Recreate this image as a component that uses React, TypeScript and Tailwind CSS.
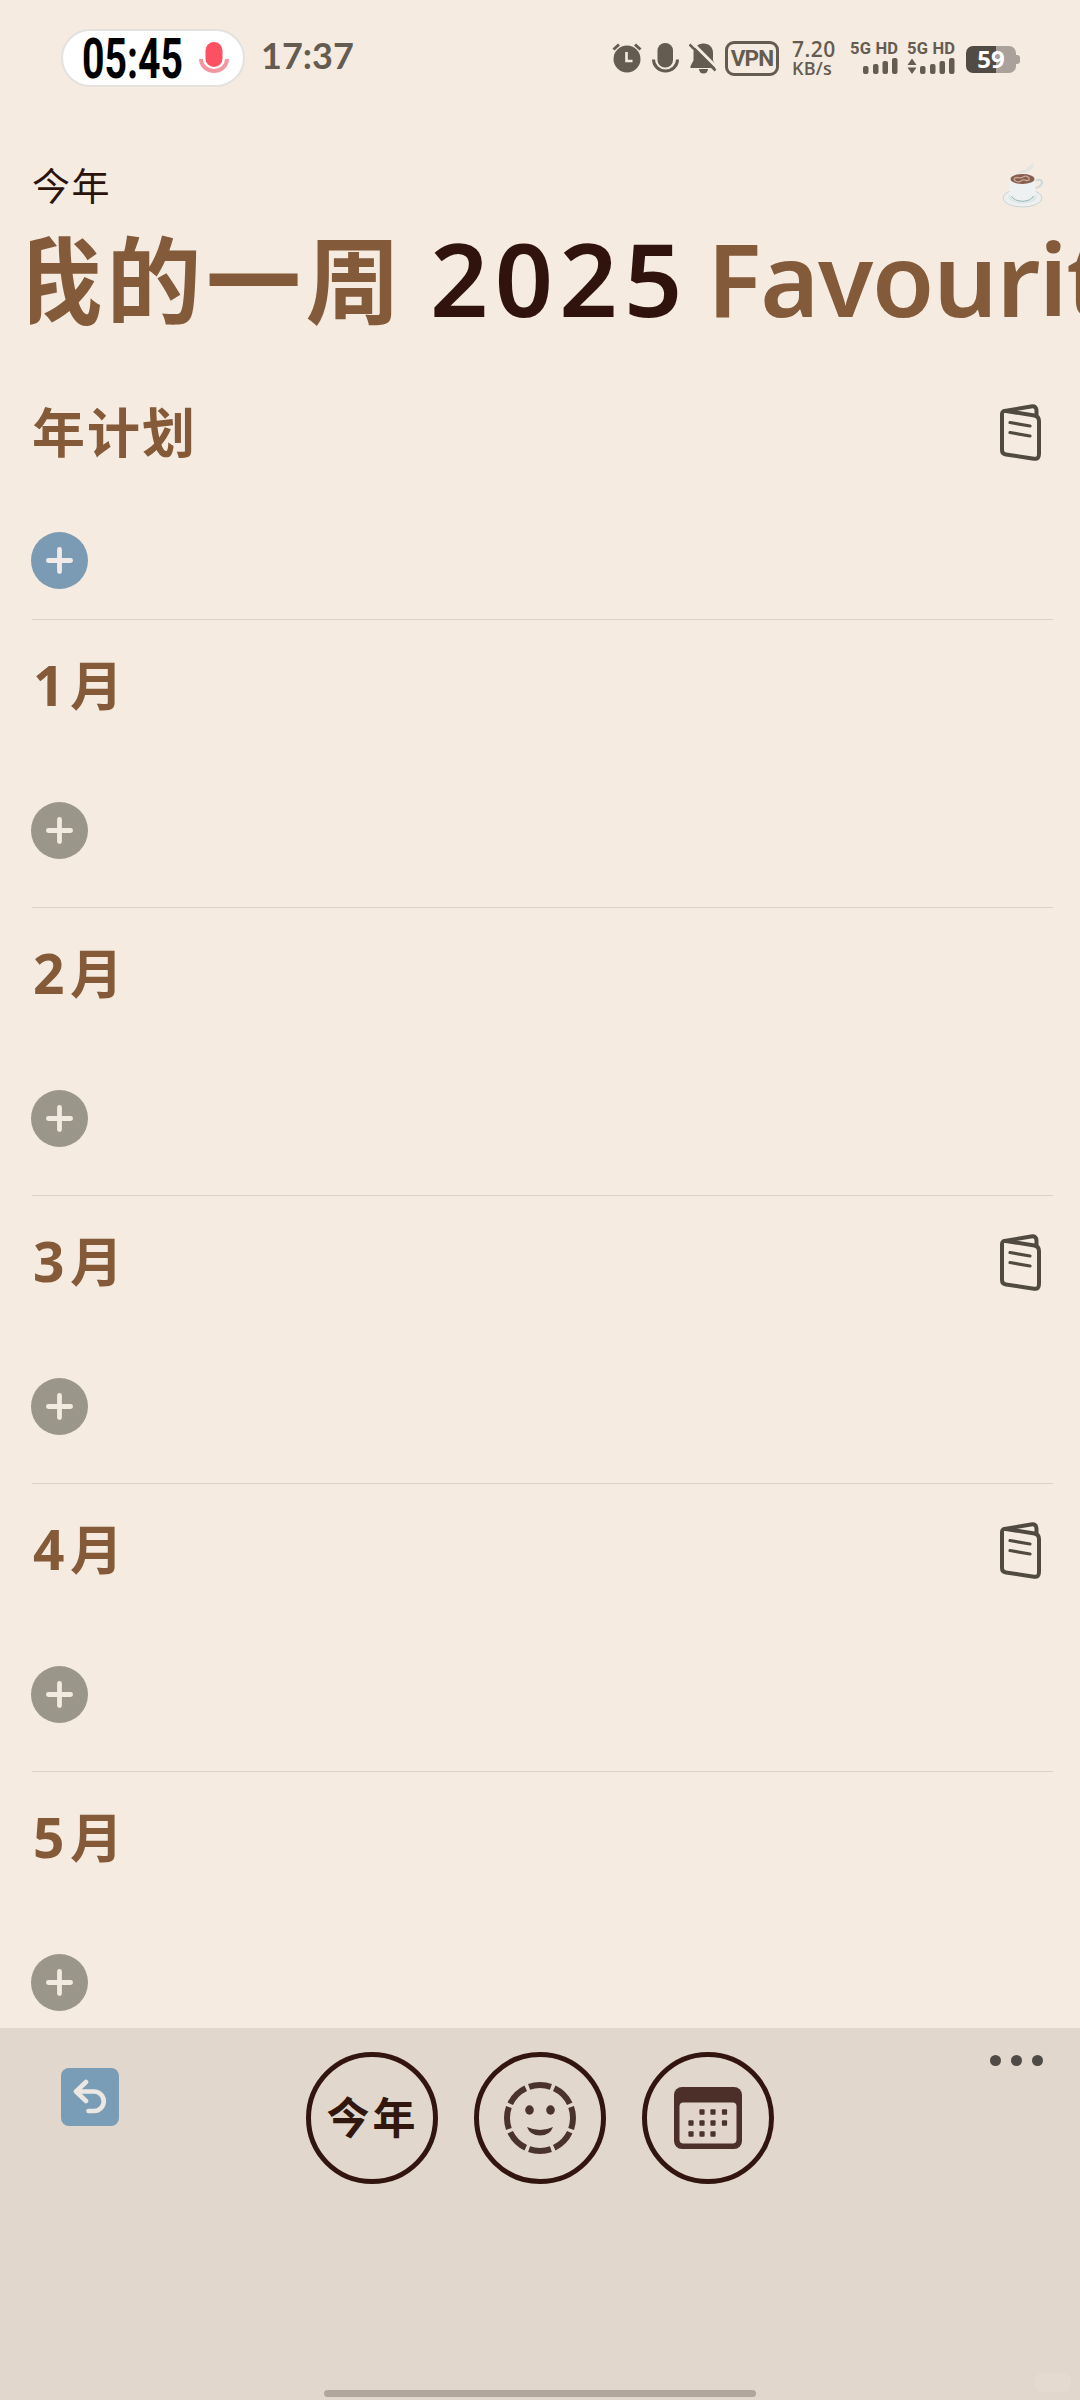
import React from "react";

const CJK = "font-['Noto_Sans_CJK_SC',sans-serif]";
const LATIN = "font-['Noto_Sans',sans-serif]";

function StatusBar() {
  return (
    <header className="flex h-[116px] shrink-0 pt-[29px] text-[#645c50]">
      <div className="ml-[61px] flex h-[58px] w-[184px] items-center rounded-full border-2 border-[#e4e2df] bg-white">
        <span className="ml-[19px] block w-[101px] pt-[3px] font-['Roboto',sans-serif] text-[56px] leading-[55px] font-bold whitespace-nowrap text-black">
          <span className="inline-block origin-left scale-x-[0.7]">05:45</span>
        </span>
        <svg className="ml-[16px]" width="30" height="34" viewBox="0 0 30 34" fill="none">
          <path d="M2 18a13 12 0 0 0 26 0" stroke="#f497a1" strokeWidth="4" />
          <rect x="6.500" y="1" width="17" height="25" rx="8.500" fill="#fc5162" />
        </svg>
      </div>
      <span className="ml-[16px] w-[97px] font-['Lato',sans-serif] text-[36px] leading-[53px] font-bold whitespace-nowrap">
        17:37
      </span>
      <div className="ml-[254px] flex h-[58px] items-center">
        <svg width="30" height="32" viewBox="0 0 30 32" fill="none">
          <circle cx="15" cy="17" r="13.500" fill="currentColor" />
          <path d="M1.500 7.500 7 2.500M28.500 7.500 23 2.500" stroke="currentColor" strokeWidth="3" />
          <path d="M14.500 10v9h6" stroke="#f5ebe1" strokeWidth="2.600" />
        </svg>
        <svg className="ml-[10px]" width="27" height="32" viewBox="0 0 27 32" fill="none">
          <rect x="5.500" y="1" width="15.500" height="24.500" rx="7.500" fill="currentColor" />
          <path d="M1.500 17.500a12 11.500 0 0 0 24 0" stroke="currentColor" strokeWidth="3" />
        </svg>
        <svg className="ml-[10px]" width="28" height="32" viewBox="0 0 28 32" fill="none">
          <path d="M14.500 1.500c6 0 9.500 4 9.500 9v8l3 5.500v2H1.500v-2l3-5.500v-8c0-4 4-9 10-9Z" fill="currentColor" />
          <path d="M10 27h9a4.500 4.500 0 0 1-9 0Z" fill="currentColor" />
          <path d="M1 -1.500 29 26.500" stroke="#f5ebe1" strokeWidth="3" />
          <path d="M.5 2.500 26.500 28.500" stroke="currentColor" strokeWidth="2.500" />
        </svg>
        <div className="ml-[8px] flex h-[35px] w-[54px] items-center justify-center rounded-[9px] border-[3px] border-current font-['Roboto',sans-serif] text-[22.500px] leading-none font-bold tracking-[-0.8px]">
          VPN
        </div>
        <div className="ml-[13px] w-[46px] font-['Open_Sans',sans-serif] font-[650]">
          <div className="text-[21px] leading-[20px] tracking-[0.5px]">7.20</div>
          <div className="text-[18px] leading-[19px] tracking-[0.2px]">KB/s</div>
        </div>
        <Signal className="ml-[12px]" />
        <Signal className="ml-[9px]" data />
        <div className="ml-[11px] flex items-center pt-[2px]">
          <div className="flex h-[27px] w-[50px] items-center justify-center rounded-[7px] bg-linear-to-r from-[#514b45] from-60% to-[#aaa19a] to-60% font-['Open_Sans',sans-serif] text-[24px] leading-none font-bold text-white">
            59
          </div>
          <div className="h-[9px] w-[4px] rounded-r-[3px] bg-[#aaa19a]" />
        </div>
      </div>
    </header>
  );
}

function Signal({ className, data = false }: { className: string; data?: boolean }) {
  return (
    <div className={`${className} w-[48px]`}>
      <div className="font-['Roboto',sans-serif] text-[16.500px] leading-[16px] font-bold tracking-[0.2px] whitespace-nowrap">
        5G HD
      </div>
      <svg width="48" height="18" viewBox="0 0 48 18" fill="currentColor">
        {data && <path d="M.5 8 5 1.500 9.500 8ZM.5 10.500h9L5 17Z" />}
        <rect x="13" y="9" width="5.500" height="8" rx="2" />
        <rect x="23" y="7" width="5.500" height="10" rx="2" />
        <rect x="32.500" y="4" width="5.500" height="13" rx="2" />
        <rect x="42" y="1" width="5.500" height="16" rx="2" />
      </svg>
    </div>
  );
}

function CoffeeCup() {
  return (
    <svg width="44" height="46" viewBox="0 0 44 46" fill="none">
      <path d="M15 11c4-5 7-3 10-6 3-2 4-4 6-5 1 5-2 7-6 9l-3 3Z" fill="#e2e2df" opacity=".8" />
      <ellipse cx="20.500" cy="35" rx="19.500" ry="9" fill="#edf0ef" stroke="#c8d5d6" />
      <ellipse cx="20.500" cy="34" rx="14" ry="6.500" fill="#dde6e7" />
      <path d="M32 19c4-4 9-2 8 1s-4 5-9 5" stroke="#d0d9da" strokeWidth="2.200" />
      <path d="M7.500 16h26v13c0 6-5 10-13 10s-13-4-13-10Z" fill="#edf1f1" />
      <path d="M9.500 33c3 7 19 7 22 0" stroke="#96b5b6" />
      <ellipse cx="20.500" cy="16" rx="13" ry="6" fill="#eef0ee" />
      <ellipse cx="20.500" cy="16" rx="12" ry="5" fill="#895c50" />
      <path d="M12 16c3-4 5 1 9-2 3-2 7 0 6 3-4 2-5-2-8 1-3 2-7 0-7-2Z" stroke="#c7aa91" strokeWidth="1.300" />
    </svg>
  );
}

function NotesIcon() {
  return (
    <svg width="42" height="58" viewBox="0 0 42 58" fill="none" stroke="#504a41" strokeLinecap="round" strokeLinejoin="round">
      <path d="M6 7 34.500 11.500Q39 12.500 39 17v33Q39 55.500 34 54.700L6 50.500Q2 50 2 46V10Q2 6.500 6 7Z" strokeWidth="4" />
      <path d="M4.500 7 31 2.500Q36.500 1.500 36.500 7v5" strokeWidth="4" />
      <path d="M10 18.500 30 22M10 28.500 30 32" strokeWidth="3.200" />
    </svg>
  );
}

function Section({ digit, label, notes, year }: { digit?: string; label: string; notes?: boolean; year?: boolean }) {
  return (
    <section
      className={`ml-[32px] mr-[27px] flex shrink-0 flex-col border-b border-[#dbd1c8] ${year ? "h-[254px]" : "h-[288px]"}`}
    >
      <div className="mt-[31px] flex h-[72px] items-center justify-between">
        <h2 className="flex items-baseline pb-[7px] font-bold text-[#845a39]">
          {digit && <span className={`${LATIN} w-[38px] pl-px text-[55px] leading-[72px]`}>{digit}</span>}
          <span className={`${CJK} text-[53px] leading-[72px] tracking-[2px]`}>{label}</span>
        </h2>
        {notes && (
          <div className="mr-[11px]">
            <NotesIcon />
          </div>
        )}
      </div>
      <button
        aria-label="添加"
        className={`-ml-px flex size-[57px] items-center justify-center rounded-full ${
          year ? "mt-[63px] bg-[#7b9bb5]" : "mt-[79px] bg-[#9a978a]"
        }`}
      >
        <svg width="27" height="27" viewBox="0 0 28 28" stroke={year ? "#f1eae8" : "#f1eae0"} strokeWidth="5" strokeLinecap="round">
          <path d="M14 2.500v23M2.500 14h23" />
        </svg>
      </button>
    </section>
  );
}

function FaceIcon() {
  return (
    <svg width="72" height="72" viewBox="0 0 72 72" fill="none">
      <circle cx="36" cy="36" r="33" stroke="#4a322d" strokeWidth="6" pathLength="80" strokeDasharray="8.600 1.400" strokeDashoffset="4.300" />
      <ellipse cx="25.500" cy="28" rx="4.300" ry="4.700" fill="#4a322d" />
      <ellipse cx="46.500" cy="28" rx="4.300" ry="4.700" fill="#4a322d" />
      <path d="M23 45q13 6 26 0-3 8.500-13 8.500T23 45Z" fill="#4a322d" />
    </svg>
  );
}

const CALENDAR_DOTS = [
  [28, 25], [39, 25], [50.5, 25],
  [17, 36], [28, 36], [39, 36], [50.5, 36],
  [17, 47], [28, 47], [39, 47],
];

function CalendarIcon() {
  return (
    <svg width="68" height="62" viewBox="0 0 68 62">
      <rect width="68" height="62" rx="8" fill="#4d2f29" />
      <rect x="5.500" y="15.500" width="57" height="41" rx="4" fill="#e1d5cb" />
      {CALENDAR_DOTS.map(([x, y]) => (
        <rect key={`${x}-${y}`} x={x - 2.6} y={y - 2.8} width="5.200" height="5.600" rx="1" fill="#4a322d" />
      ))}
    </svg>
  );
}

function RoundButton({ children }: { children: React.ReactNode }) {
  return (
    <button className="flex size-[132px] items-center justify-center rounded-full border-[5px] border-[#32150f]">
      {children}
    </button>
  );
}

export default function App() {
  return (
    <div className="flex h-[2400px] w-[1080px] flex-col overflow-hidden bg-[#f5ebe1]">
      <StatusBar />
      <div className="flex h-[100px] shrink-0 items-center justify-between pt-[40px] pr-[34px] pl-[32px]">
        <div className={`${CJK} pb-[4px] text-[38px] leading-[60px] tracking-[1.500px] text-[#2a130d]`}>今年</div>
        <CoffeeCup />
      </div>
      <div className="ml-[30px] h-[150px] shrink-0 overflow-hidden">
        <h1 className="-ml-[23px] flex h-[120px] items-baseline leading-[120px] whitespace-nowrap">
          <span className={`${CJK} w-[423px] shrink-0 text-[95px] font-bold tracking-[4.500px] text-[#845b3a]`}>我的一周</span>
          <span className={`${LATIN} w-[277px] shrink-0 text-[102px] font-[560] tracking-[6.300px] text-[#31130d]`}>2025</span>
          <span className={`${LATIN} text-[101px] font-[570] tracking-[-1.200px] text-[#845b3a]`}>Favourites</span>
        </h1>
      </div>
      <main className="flex min-h-0 flex-1 flex-col overflow-hidden">
        <Section label="年计划" notes year />
        <Section digit="1" label="月" />
        <Section digit="2" label="月" />
        <Section digit="3" label="月" notes />
        <Section digit="4" label="月" notes />
        <Section digit="5" label="月" />
      </main>
      <footer className="relative h-[372px] shrink-0 bg-[#e1d7cc]">
        <div className="flex items-start pr-[37px] pl-[61px]">
          <button aria-label="返回" className="mt-[40px] flex size-[58px] items-center justify-center rounded-[8px] bg-[#799db7]">
            <svg width="34" height="36" viewBox="0 0 34 36" fill="none" stroke="#ece7e3" strokeWidth="4.600" strokeLinecap="round" strokeLinejoin="round">
              <path d="M13 3 3 12.500 13 22M4 12.500h17a9.700 9.700 0 0 1 0 19.500h-5.500" />
            </svg>
          </button>
          <nav className="mt-[24px] ml-[187px] flex gap-[36px]">
            <RoundButton>
              <span className={`${CJK} -mr-[1px] pb-[6px] text-[43px] leading-[60px] font-bold tracking-[3px] text-[#32170e]`}>今年</span>
            </RoundButton>
            <RoundButton>
              <FaceIcon />
            </RoundButton>
            <RoundButton>
              <CalendarIcon />
            </RoundButton>
          </nav>
          <button aria-label="更多" className="mt-[27px] ml-auto flex gap-[10px]">
            <span className="size-[11px] rounded-full bg-[#4f4a45]" />
            <span className="size-[11px] rounded-full bg-[#4f4a45]" />
            <span className="size-[11px] rounded-full bg-[#4f4a45]" />
          </button>
        </div>
        <div className="absolute bottom-[3px] left-[324px] h-[7px] w-[432px] rounded-full bg-[#b0a69b]" />
        <div className="absolute right-[9px] bottom-[8px] h-[19px] w-[36px] rounded-[7px] bg-[#e4dad0]" />
      </footer>
    </div>
  );
}
